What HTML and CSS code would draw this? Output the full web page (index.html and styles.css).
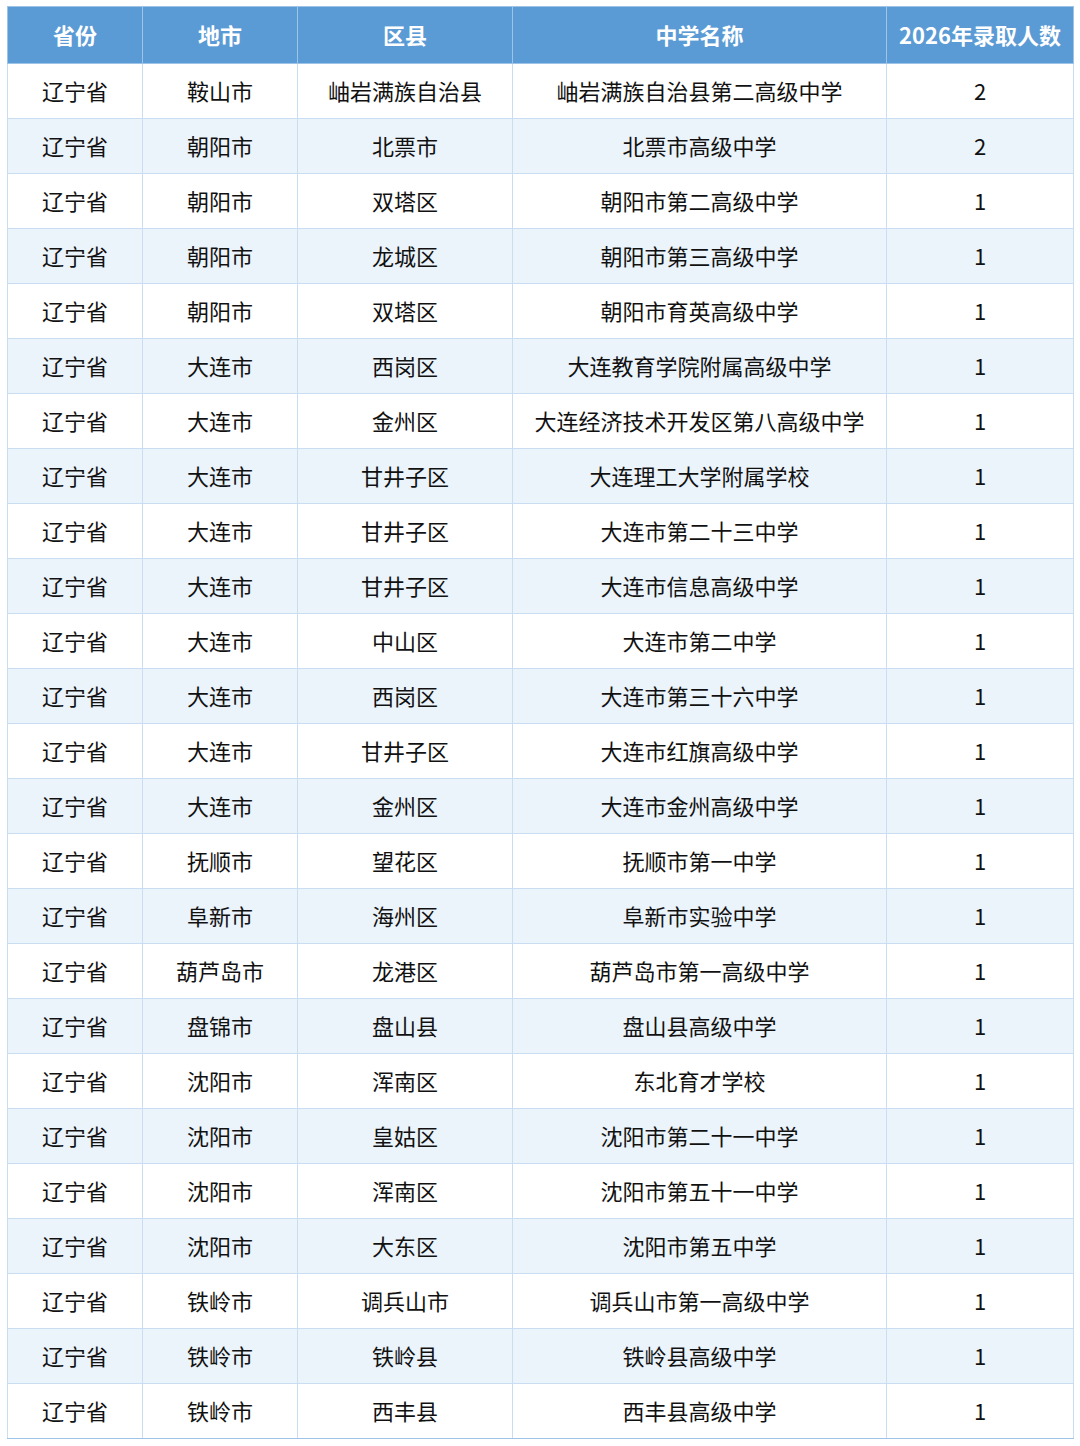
FILE: index.html
```html
<!DOCTYPE html>
<html lang="zh-CN">
<head>
<meta charset="utf-8">
<title>2026年录取人数</title>
<link rel="stylesheet" href="styles.css">
</head>
<body>
<div class="wrap">
<table class="data">
<colgroup>
<col class="c1"><col class="c2"><col class="c3"><col class="c4"><col class="c5">
</colgroup>
<thead>
<tr><th>省份</th><th>地市</th><th>区县</th><th>中学名称</th><th>2026年录取人数</th></tr>
</thead>
<tbody>
<tr><td>辽宁省</td><td>鞍山市</td><td>岫岩满族自治县</td><td>岫岩满族自治县第二高级中学</td><td>2</td></tr>
<tr><td>辽宁省</td><td>朝阳市</td><td>北票市</td><td>北票市高级中学</td><td>2</td></tr>
<tr><td>辽宁省</td><td>朝阳市</td><td>双塔区</td><td>朝阳市第二高级中学</td><td>1</td></tr>
<tr><td>辽宁省</td><td>朝阳市</td><td>龙城区</td><td>朝阳市第三高级中学</td><td>1</td></tr>
<tr><td>辽宁省</td><td>朝阳市</td><td>双塔区</td><td>朝阳市育英高级中学</td><td>1</td></tr>
<tr><td>辽宁省</td><td>大连市</td><td>西岗区</td><td>大连教育学院附属高级中学</td><td>1</td></tr>
<tr><td>辽宁省</td><td>大连市</td><td>金州区</td><td>大连经济技术开发区第八高级中学</td><td>1</td></tr>
<tr><td>辽宁省</td><td>大连市</td><td>甘井子区</td><td>大连理工大学附属学校</td><td>1</td></tr>
<tr><td>辽宁省</td><td>大连市</td><td>甘井子区</td><td>大连市第二十三中学</td><td>1</td></tr>
<tr><td>辽宁省</td><td>大连市</td><td>甘井子区</td><td>大连市信息高级中学</td><td>1</td></tr>
<tr><td>辽宁省</td><td>大连市</td><td>中山区</td><td>大连市第二中学</td><td>1</td></tr>
<tr><td>辽宁省</td><td>大连市</td><td>西岗区</td><td>大连市第三十六中学</td><td>1</td></tr>
<tr><td>辽宁省</td><td>大连市</td><td>甘井子区</td><td>大连市红旗高级中学</td><td>1</td></tr>
<tr><td>辽宁省</td><td>大连市</td><td>金州区</td><td>大连市金州高级中学</td><td>1</td></tr>
<tr><td>辽宁省</td><td>抚顺市</td><td>望花区</td><td>抚顺市第一中学</td><td>1</td></tr>
<tr><td>辽宁省</td><td>阜新市</td><td>海州区</td><td>阜新市实验中学</td><td>1</td></tr>
<tr><td>辽宁省</td><td>葫芦岛市</td><td>龙港区</td><td>葫芦岛市第一高级中学</td><td>1</td></tr>
<tr><td>辽宁省</td><td>盘锦市</td><td>盘山县</td><td>盘山县高级中学</td><td>1</td></tr>
<tr><td>辽宁省</td><td>沈阳市</td><td>浑南区</td><td>东北育才学校</td><td>1</td></tr>
<tr><td>辽宁省</td><td>沈阳市</td><td>皇姑区</td><td>沈阳市第二十一中学</td><td>1</td></tr>
<tr><td>辽宁省</td><td>沈阳市</td><td>浑南区</td><td>沈阳市第五十一中学</td><td>1</td></tr>
<tr><td>辽宁省</td><td>沈阳市</td><td>大东区</td><td>沈阳市第五中学</td><td>1</td></tr>
<tr><td>辽宁省</td><td>铁岭市</td><td>调兵山市</td><td>调兵山市第一高级中学</td><td>1</td></tr>
<tr><td>辽宁省</td><td>铁岭市</td><td>铁岭县</td><td>铁岭县高级中学</td><td>1</td></tr>
<tr><td>辽宁省</td><td>铁岭市</td><td>西丰县</td><td>西丰县高级中学</td><td>1</td></tr>
</tbody>
</table>
</div>
</body>
</html>
```

FILE: styles.css
```css
html, body {
  margin: 0;
  padding: 0;
  background: #ffffff;
}
.wrap {
  padding: 6px 7px 0 7px;
}
.data {
  width: 1066px;
  border-collapse: collapse;
  table-layout: fixed;
  font-family: "Noto Sans CJK SC", "Noto Sans", sans-serif;
  font-size: 22px;
  color: #111111;
  border: 1px solid #9dc3e6;
}
.c1 { width: 135px; }
.c2 { width: 155px; }
.c3 { width: 215px; }
.c4 { width: 374px; }
.c5 { width: 187px; }
.data th {
  background: #5b9bd5;
  color: #ffffff;
  font-weight: bold;
  font-size: 22px;
  height: 54px;
  padding: 0 0 2px 0;
  text-align: center;
  border: 1px solid #9dc3e6;
}
.data td {
  height: 52px;
  padding: 0 0 2px 0;
  text-align: center;
  border: 1px solid #c9def2;
  white-space: nowrap;
}
.data tbody tr:nth-child(even) td {
  background: #ebf3fb;
}
.data tbody tr:last-child td {
  border-bottom: 1px solid #9dc3e6;
}
```
